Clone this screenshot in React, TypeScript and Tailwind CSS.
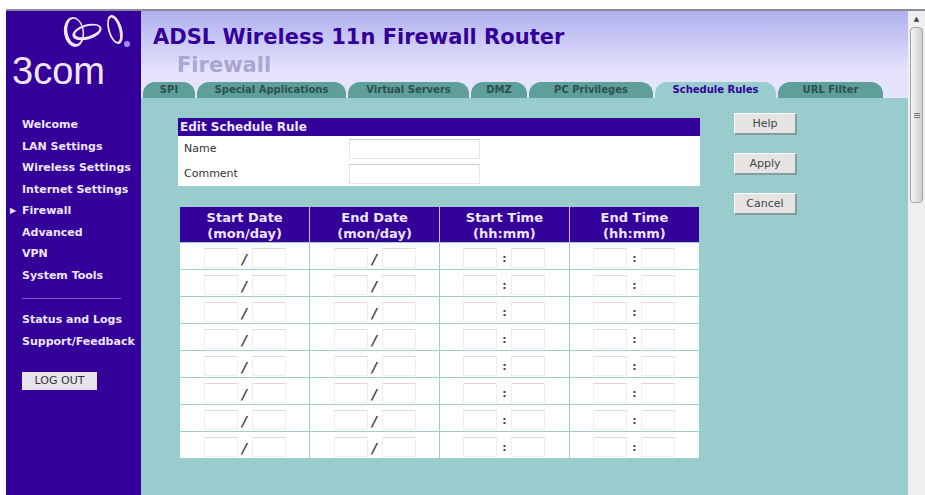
import { useState } from "react";

const mainLinks = [
  "Welcome",
  "LAN Settings",
  "Wireless Settings",
  "Internet Settings",
  "Firewall",
  "Advanced",
  "VPN",
  "System Tools",
];

const tabs = [
  { label: "SPI", width: "w-[52px]" },
  { label: "Special Applications", width: "w-[149px]" },
  { label: "Virtual Servers", width: "w-[121px]" },
  { label: "DMZ", width: "w-[56px]" },
  { label: "PC Privileges", width: "w-[124px]" },
  { label: "Schedule Rules", width: "w-[121px]" },
  { label: "URL Filter", width: "w-[105px]" },
];

const columns = [
  { title: "Start Date", format: "(mon/day)", separator: "/" },
  { title: "End Date", format: "(mon/day)", separator: "/" },
  { title: "Start Time", format: "(hh:mm)", separator: ":" },
  { title: "End Time", format: "(hh:mm)", separator: ":" },
];

function Logo() {
  return (
    <div className="h-[82px] pl-1.5 font-normal text-[#f3e6fb]">
      {/* rings are an outer ellipse minus a shifted inner one, so one side is thicker */}
      <svg viewBox="56 11 84 37" className="ml-11 h-[37px] w-[84px]" fill="currentColor" fillRule="evenodd">
        <path
          transform="rotate(-8 74 32)"
          d="M64 32a10 15 0 1 0 20 0a10 15 0 1 0-20 0zM67.500 31.500a7.500 12.800 0 1 0 15 0a7.500 12.800 0 1 0-15 0z"
        />
        <path
          transform="rotate(-16 87 32)"
          d="M72 32a15 7.500 0 1 0 30 0a15 7.500 0 1 0-30 0zM75 31.500a12.500 5 0 1 0 25 0a12.500 5 0 1 0-25 0z"
        />
        <path
          transform="rotate(-16 115 29.500)"
          d="M108 29.500a7 15 0 1 0 14 0a7 15 0 1 0-14 0zM109.800 29.500a4.600 12.500 0 1 0 9.200 0a4.600 12.500 0 1 0-9.200 0z"
        />
        <circle cx="127" cy="44" r="3" fill="#a58cf0" />
      </svg>
      <div className="h-[40px] font-['Liberation_Sans',Arial,sans-serif] text-[38px] leading-[46px]">3com</div>
    </div>
  );
}

function NavLink({ label, active = false }: { label: string; active?: boolean }) {
  return (
    <li className="flex items-center">
      <span className="w-4 pl-1 text-[8px] leading-none">{active ? "▶" : ""}</span>
      <a href="#" className="whitespace-nowrap">{label}</a>
    </li>
  );
}

function Sidebar() {
  return (
    <aside className="w-[135px] shrink-0 bg-[#330099] text-[11px] leading-[20px] font-bold text-[#efe6ff]">
      <Logo />
      <nav className="pt-[22px]">
        <ul className="flex h-[171px] flex-col justify-between">
          {mainLinks.map((label) => (
            <NavLink key={label} label={label} active={label === "Firewall"} />
          ))}
        </ul>
        <hr className="mt-3 mr-5 mb-[11px] ml-4 border-[#7a5cc8]" />
        <ul className="flex flex-col gap-0.5">
          <NavLink label="Status and Logs" />
          <NavLink label="Support/Feedback" />
        </ul>
      </nav>
      <button className="mt-5 ml-4 h-[18px] w-[75px] bg-[#e8e4ee] text-[11px] leading-[18px] font-normal text-[#333]">
        LOG OUT
      </button>
    </aside>
  );
}

function SideButton({ label }: { label: string }) {
  return (
    <button className="h-[22px] w-[63px] border-t border-r-2 border-b-2 border-l border-t-white border-r-[#8a9a9c] border-b-[#8a9a9c] border-l-white bg-[#e6e4e2] text-[11px] leading-none text-[#444]">
      {label}
    </button>
  );
}

function RuleDetails() {
  return (
    <section className="bg-white text-[11px]">
      <h2 className="h-[18px] bg-[#330099] pl-0.5 text-[12px] leading-[18px] font-bold text-[#efe6ff]">
        Edit Schedule Rule
      </h2>
      {["Name", "Comment"].map((label) => (
        <div key={label} className="flex h-[25px] items-center pl-1.5">
          <label htmlFor={label} className="w-[165px] pt-0.5 text-[#333]">{label}</label>
          <input id={label} className="h-[20px] w-[131px] border border-[#e6e3ea] border-t-[#d2c8dc] px-1" />
        </div>
      ))}
    </section>
  );
}

function PartInput({ label }: { label: string }) {
  return (
    <input
      aria-label={label}
      className="h-[20px] w-[34px] border border-[#efedf1] border-t-[#dcdadf] px-1 text-[11px]"
    />
  );
}

function ScheduleTable() {
  return (
    <div className="pt-[21px] pr-px pl-0.5">
      <table className="w-full table-fixed border-collapse text-center">
        <thead>
          <tr>
            {columns.map((column) => (
              <th
                key={column.title}
                className="h-[35px] border-x border-[#b9c4e8] bg-[#330099] px-0 pt-[3px] pb-0 text-[13px] leading-[16px] font-bold text-[#efe6ff] first:border-l-0 last:border-r-0"
              >
                {column.title}
                <br />
                {column.format}
              </th>
            ))}
          </tr>
        </thead>
        <tbody className="bg-white">
          {Array.from({ length: 8 }, (_, row) => (
            <tr key={row}>
              {columns.map((column) => (
                <td
                  key={column.title}
                  className="h-[27px] border border-[#9fcfc8] p-0 first:border-l-0 last:border-r-0"
                >
                  <div className="flex items-end justify-center pt-1">
                    <PartInput label={`${column.title} ${row + 1}, first part`} />
                    <span
                      className={`w-3.5 leading-[18px] font-bold text-[#444] ${
                        column.separator === "/" ? "text-[14px] italic" : "text-[11px]"
                      }`}
                    >
                      {column.separator}
                    </span>
                    <PartInput label={`${column.title} ${row + 1}, second part`} />
                  </div>
                </td>
              ))}
            </tr>
          ))}
        </tbody>
      </table>
    </div>
  );
}

function ScrollRail() {
  return (
    <div className="flex w-[17px] shrink-0 flex-col items-center bg-[#f0eef0]">
      <span className="h-4 text-[7px] leading-[16px] text-[#444]">▲</span>
      <div className="flex h-[176px] w-[13px] flex-col items-center justify-center gap-px rounded-sm border border-[#a3a3a8] bg-linear-to-r from-[#f6f6f6] to-[#cfcfd3]">
        <i className="h-px w-1.5 bg-[#77777c]" />
        <i className="h-px w-1.5 bg-[#77777c]" />
        <i className="h-px w-1.5 bg-[#77777c]" />
      </div>
    </div>
  );
}

export default function App() {
  const [activeTab, setActiveTab] = useState("Schedule Rules");

  return (
    <div className="flex min-h-screen flex-col bg-white pt-[9px] pl-1.5 font-['DejaVu_Sans',Verdana,sans-serif]">
      <div className="flex flex-1 border-t-2 border-[#8c8c94]">
        <Sidebar />
        <main className="min-w-0 flex-1 bg-[#99cccc]">
          <header className="flex h-[87px] flex-col justify-between bg-linear-to-b from-[#b0b0ee] to-[#e6e4fd] to-70%">
            <div>
              <h1 className="pt-3 pl-3 text-[21px] leading-[28px] font-bold text-[#330099]">
                ADSL Wireless 11n Firewall Router
              </h1>
              <p className="pl-9 text-[21px] leading-[28px] font-bold text-[#a9a6cf]">Firewall</p>
            </div>
            <div role="tablist" className="flex gap-0.5 pl-0.5">
              {tabs.map(({ label, width }) => (
                <button
                  key={label}
                  role="tab"
                  aria-selected={label === activeTab}
                  onClick={() => setActiveTab(label)}
                  className={`${width} h-[16px] rounded-t-[12px] text-[10px] leading-[16px] font-bold whitespace-nowrap ${
                    label === activeTab ? "bg-[#99cccc] text-[#330099]" : "bg-[#5f9f99] text-[#2c4f50]"
                  }`}
                >
                  {label}
                </button>
              ))}
            </div>
          </header>
          <div className="flex pt-[15px] pl-[37px]">
            <div className="min-w-0 flex-1 pt-[5px]">
              <RuleDetails />
              <ScheduleTable />
            </div>
            <div className="flex w-[208px] shrink-0 flex-col gap-[18px] pl-[34px]">
              <SideButton label="Help" />
              <SideButton label="Apply" />
              <SideButton label="Cancel" />
            </div>
          </div>
        </main>
        <ScrollRail />
      </div>
    </div>
  );
}
